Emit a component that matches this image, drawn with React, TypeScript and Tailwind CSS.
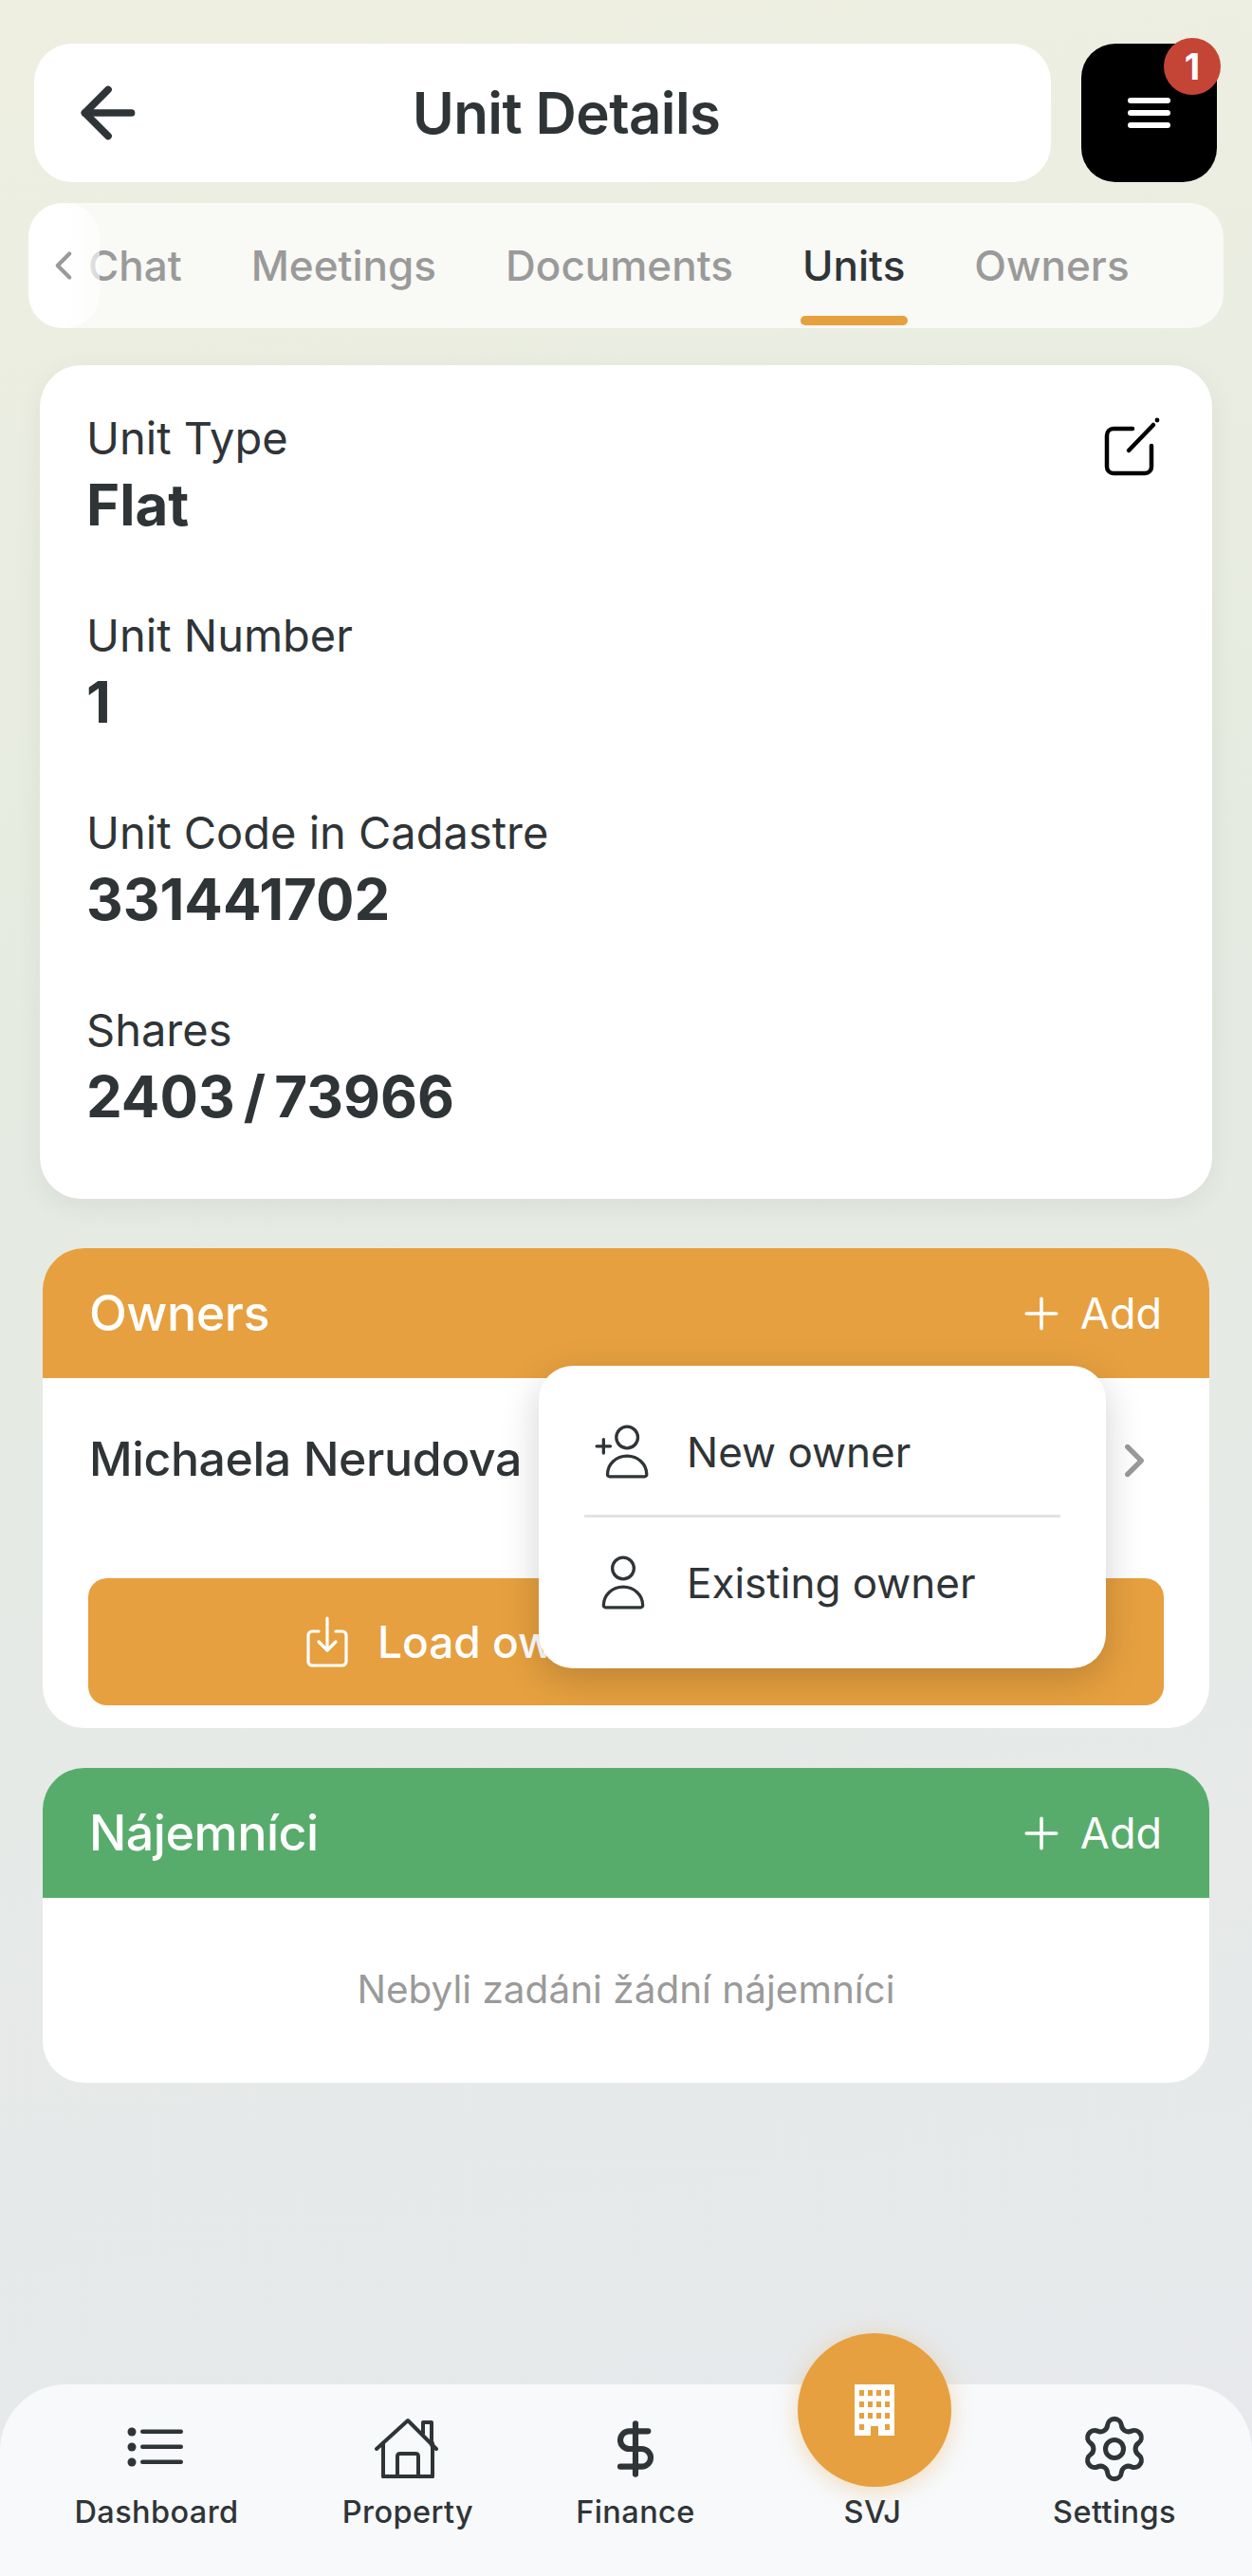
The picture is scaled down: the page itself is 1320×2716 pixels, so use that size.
import { ArrowLeft, ChevronLeft, ChevronRight, Plus, Settings, DollarSign } from "lucide-react";

const tabs = ["Chat", "Meetings", "Documents", "Units", "Owners"];

const details = [
  { label: "Unit Type", value: "Flat" },
  { label: "Unit Number", value: "1" },
  { label: "Unit Code in Cadastre", value: "331441702" },
  { label: "Shares", value: "2403 / 73966" },
];

function PersonIcon({ plus }: { plus?: boolean }) {
  return (
    <svg width="62" height="62" viewBox="0 0 60 60" fill="none" stroke="currentColor" strokeWidth="3.2" strokeLinecap="round" strokeLinejoin="round">
      <circle cx={plus ? 34 : 30} cy="15" r="11" />
      <path d={plus ? "M14 53c0-11 9-19 20-19s20 8 20 19c0 1-1 2-2 2H16c-1 0-2-1-2-2z" : "M10 53c0-11 9-19 20-19s20 8 20 19c0 1-1 2-2 2H12c-1 0-2-1-2-2z"} />
      {plus && <path d="M3 24h14M10 17v14" />}
    </svg>
  );
}

function EditIcon() {
  return (
    <svg width="62" height="64" viewBox="0 0 62 64" fill="none" stroke="#000000" strokeWidth="4.5" strokeLinecap="round" strokeLinejoin="round">
      <path d="M32 14H12c-4 0-7 3-7 7v33c0 4 3 7 7 7h33c4 0 7-3 7-7V32" />
      <path d="M28 37 54 10" />
      <circle cx="58" cy="5" r="2.4" fill="#000000" strokeWidth="0" />
    </svg>
  );
}

function ListIcon() {
  return (
    <svg width="62" height="48" viewBox="0 0 62 48" fill="currentColor">
      <circle cx="5" cy="6" r="4.5" />
      <circle cx="5" cy="22" r="4.5" />
      <circle cx="5" cy="38" r="4.5" />
      <rect x="14" y="3.5" width="45" height="4.5" rx="2.2" />
      <rect x="14" y="19.5" width="45" height="4.5" rx="2.2" />
      <rect x="14" y="35.5" width="45" height="4.5" rx="2.2" />
    </svg>
  );
}

function HouseIcon() {
  return (
    <svg width="70" height="66" viewBox="0 0 70 66" fill="none" stroke="currentColor" strokeWidth="4" strokeLinecap="round" strokeLinejoin="round">
      <path d="M2 33 35 3l30 30" />
      <path d="M51 17V5h9v24" />
      <path d="M9 27v35h15V41c0-2 1-3 3-3h16c2 0 3 1 3 3v21h15V27" />
      <path d="M9 62h52" />
    </svg>
  );
}

function BuildingIcon() {
  return (
    <svg width="42" height="54" viewBox="0 0 42 54" fill="#ffffff">
      <path fillRule="evenodd" d="M0 0h42v54H25V44h-8v10H0z M5 6v6h5V6z M14 6v6h5V6z M23 6v6h5V6z M32 6v6h5V6z M5 18v6h5v-6z M14 18v6h5v-6z M23 18v6h5v-6z M32 18v6h5v-6z M5 30v6h5v-6z M14 30v6h5v-6z M23 30v6h5v-6z M32 30v6h5v-6z M5 42v6h5v-6z M32 42v6h5v-6z" />
    </svg>
  );
}

function LoadIcon() {
  return (
    <svg width="44" height="56" viewBox="0 0 44 56" fill="none" stroke="currentColor" strokeWidth="3.2" strokeLinecap="round" strokeLinejoin="round">
      <path d="M13 17H6c-2 0-4 2-4 4v28c0 2 2 4 4 4h32c2 0 4-2 4-4V21c0-2-2-4-4-4h-7" />
      <path d="M22 3v33M13 28l9 9 9-9" />
    </svg>
  );
}

function SectionHeader({ title, color }: { title: string; color: string }) {
  return (
    <div className={`flex h-[137px] items-center justify-between pl-[49px] pr-[50px] text-white ${color}`}>
      <span className="text-[52px] font-medium tracking-[-0.5px]">{title}</span>
      <span className="flex items-center gap-[14px] text-[45px]">
        <Plus size={54} strokeWidth={1.6} />
        Add
      </span>
    </div>
  );
}

export default function App() {
  return (
    <div
      className="flex h-[2716px] w-[1320px] flex-col overflow-hidden bg-[linear-gradient(172deg,#eeefe1_0%,#e5ebe1_40%,#e6eae6_60%,#e7e9ed_100%)] text-[#2f3437]"
      style={{ fontFamily: "Inter, 'Noto Sans', sans-serif" }}
    >
      {/* Header */}
      <div className="flex gap-[32px] pl-[36px] pr-[37px] pt-[46px]">
        <div className="relative flex h-[146px] w-[1073px] items-center justify-center rounded-[40px] bg-white pl-[50px]">
          <ArrowLeft size={84} strokeWidth={2.2} className="absolute left-[36px]" />
          <h1 className="text-[60px] font-semibold tracking-[-0.6px]">Unit Details</h1>
        </div>
        <div className="relative flex h-[146px] w-[143px] items-center justify-center rounded-[36px] bg-black">
          <div className="flex flex-col gap-[7px]">
            <div className="h-[6px] w-[45px] rounded-full bg-white" />
            <div className="h-[6px] w-[45px] rounded-full bg-white" />
            <div className="h-[6px] w-[45px] rounded-full bg-white" />
          </div>
          <span className="absolute right-[-4px] top-[-6px] flex h-[60px] w-[60px] items-center justify-center rounded-full bg-[#c44536] text-[38px] font-bold text-white">
            1
          </span>
        </div>
      </div>

      {/* Tabs */}
      <div className="relative mx-[30px] mt-[22px] flex h-[132px] items-center overflow-hidden rounded-[36px] bg-[#f9f9f5]">
        <div className="flex gap-[73px] pl-[63px] text-[44px] font-medium text-[#9a9a9a]">
          {tabs.map((tab) => (
            <span key={tab} className={tab === "Units" ? "text-[#2f3437]" : ""}>
              {tab}
            </span>
          ))}
        </div>
        <div className="absolute bottom-0 left-0 top-0 flex w-[75px] items-center rounded-r-[36px] bg-gradient-to-r from-white via-white to-white/60 pl-[12px] text-[#9a9a9a]">
          <ChevronLeft size={50} strokeWidth={2} />
        </div>
        <div className="absolute bottom-[3px] left-[814px] h-[10px] w-[113px] rounded-full bg-[#e6a03f]" />
      </div>

      {/* Unit details */}
      <div className="relative mx-[42px] mt-[39px] flex h-[879px] flex-col gap-[88px] rounded-[44px] bg-white pl-[49px] pt-[48px] shadow-[0_8px_30px_rgba(0,0,0,0.06)]">
        <div className="absolute right-[54px] top-[53px]">
          <EditIcon />
        </div>
        {details.map((d) => (
          <div key={d.label} className="h-[120px]">
            <div className="text-[47px] leading-[58px]">{d.label}</div>
            <div className="mt-[6px] text-[60px] font-bold leading-[70px] [word-spacing:-5px]">{d.value}</div>
          </div>
        ))}
      </div>

      {/* Owners */}
      <div className="relative mx-[45px] mt-[52px] h-[506px] rounded-[44px] bg-white">
        <div className="overflow-hidden rounded-t-[44px]">
          <SectionHeader title="Owners" color="bg-[#e6a03f]" />
        </div>
        <div className="flex h-[211px] items-start justify-between pl-[49px] pr-[50px] pt-[48px]">
          <span className="text-[50px] font-medium tracking-[-0.4px]">Michaela Nerudova</span>
          <ChevronRight size={58} strokeWidth={2.2} className="mt-[10px] text-[#9a9a9a]" />
        </div>
        <div className="mx-[48px] flex h-[134px] items-center gap-[31px] rounded-[20px] bg-[#e6a03f] pl-[230px] text-white">
          <LoadIcon />
          <span className="text-[46px] font-medium">Load owners</span>
        </div>

        {/* Add owner menu */}
        <div className="absolute left-[523px] top-[124px] h-[319px] w-[598px] rounded-[36px] bg-white px-[48px] shadow-[0_12px_40px_rgba(0,0,0,0.18)]">
          <div className="flex h-[160px] items-center gap-[36px] border-b-[3px] border-[#e2e2e2] pl-[10px] pt-[24px]">
            <PersonIcon plus />
            <span className="text-[44px]">New owner</span>
          </div>
          <div className="flex h-[159px] items-center gap-[36px] pb-[22px] pl-[10px]">
            <PersonIcon />
            <span className="text-[44px]">Existing owner</span>
          </div>
        </div>
      </div>

      {/* Tenants */}
      <div className="mx-[45px] mt-[42px] h-[332px] overflow-hidden rounded-[44px] bg-white">
        <SectionHeader title="Nájemníci" color="bg-[#58ac6b]" />
        <div className="flex h-[195px] items-center justify-center text-[40.5px] text-[#9a9a9a]">
          Nebyli zadáni žádní nájemníci
        </div>
      </div>

      {/* Bottom nav */}
      <div className="relative mt-auto flex h-[202px] items-start justify-between rounded-t-[70px] bg-[#f7f9fb] pl-[78px] pr-[78px] pt-[30px] text-[32.5px] font-medium">
        <div className="flex w-[174px] flex-col items-center">
          <div className="flex h-[76px] items-center"><ListIcon /></div>
          <span className="mt-[5px] tracking-[0.4px]">Dashboard</span>
        </div>
        <div className="flex w-[140px] flex-col items-center">
          <div className="flex h-[76px] items-center"><HouseIcon /></div>
          <span className="mt-[5px] tracking-[0.4px]">Property</span>
        </div>
        <div className="flex w-[124px] flex-col items-center">
          <div className="flex h-[76px] items-center"><DollarSign size={64} strokeWidth={2.3} /></div>
          <span className="mt-[5px] tracking-[0.4px]">Finance</span>
        </div>
        <div className="flex w-[160px] flex-col items-center">
          <div className="h-[76px]" />
          <span className="mt-[5px] tracking-[0.4px]">SVJ</span>
          <div className="absolute right-[317px] top-[-54px] flex h-[162px] w-[162px] items-center justify-center rounded-full bg-[#e6a03f] shadow-[0_4px_24px_rgba(230,160,63,0.35)]">
            <BuildingIcon />
          </div>
        </div>
        <div className="flex w-[134px] flex-col items-center">
          <div className="flex h-[76px] items-center"><Settings size={76} strokeWidth={1.6} /></div>
          <span className="mt-[5px] tracking-[0.4px]">Settings</span>
        </div>
      </div>
    </div>
  );
}
